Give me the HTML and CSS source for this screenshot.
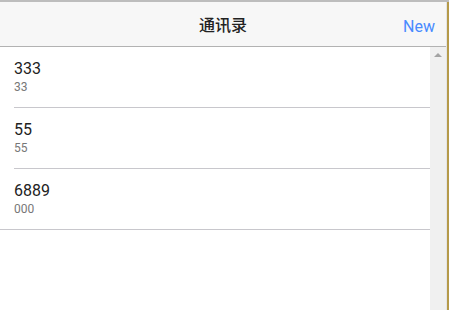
FILE: index.html
```html
<!DOCTYPE html>
<html>
<head>
<meta charset="utf-8">
<link rel="stylesheet" href="styles.css">
</head>
<body>
<div class="frame">
  <div class="app">
    <header class="toolbar">
      <div class="title">通讯录</div>
      <div class="new">New</div>
    </header>
    <div class="content">
      <ul class="list">
        <li class="item"><div class="name">333</div><div class="sub">33</div></li>
        <li class="item"><div class="name">55</div><div class="sub">55</div></li>
        <li class="item last"><div class="name">6889</div><div class="sub">000</div></li>
      </ul>
      <div class="scrollbar"><span class="arrow"></span></div>
    </div>
  </div>
  <div class="edge"></div>
</div>
</body>
</html>
```

FILE: styles.css
```css
html, body {
  margin: 0;
  padding: 0;
  height: 100%;
  background: #fff;
  font-family: Roboto, "Liberation Sans", Arial, "Noto Sans CJK SC", sans-serif;
}
.frame {
  display: flex;
  height: 310px;
  width: 449px;
  border-top: 2px solid #bdbdbd;
  box-sizing: border-box;
}
.app {
  flex: 1;
  display: flex;
  flex-direction: column;
  border-right: 1px solid #e4e4e4;
}
.edge {
  width: 2px;
  background: #b59a4a;
}
.toolbar {
  height: 44px;
  background: #f7f7f7;
  border-bottom: 1px solid #b2b2b2;
  display: flex;
  align-items: center;
  justify-content: center;
  position: relative;
}
.title {
  font-family: "Noto Sans CJK SC", sans-serif;
  font-size: 16px;
  color: #222;
  font-weight: 500;
}
.new {
  position: absolute;
  right: 11px;
  top: 15px;
  font-size: 16px;
  color: #488aff;
}
.content {
  flex: 1;
  display: flex;
}
.list {
  flex: 1;
  margin: 0;
  padding: 0;
  list-style: none;
}
.item {
  margin-left: 14px;
  border-bottom: 1px solid #c8c7cc;
  padding-top: 12px;
  box-sizing: border-box;
  height: 61px;
}
.item.last {
  margin-left: 0;
  padding-left: 14px;
}
.name {
  font-size: 16px;
  color: #222;
  line-height: 20px;
}
.sub {
  font-size: 12px;
  color: #777;
  line-height: 16px;
}
.scrollbar {
  width: 16px;
  background: #f0f0f0;
  display: flex;
  justify-content: center;
}
.arrow {
  margin-top: 6px;
  width: 0;
  height: 0;
  border-left: 4px solid transparent;
  border-right: 4px solid transparent;
  border-bottom: 4px solid #a3a3a3;
}
```
